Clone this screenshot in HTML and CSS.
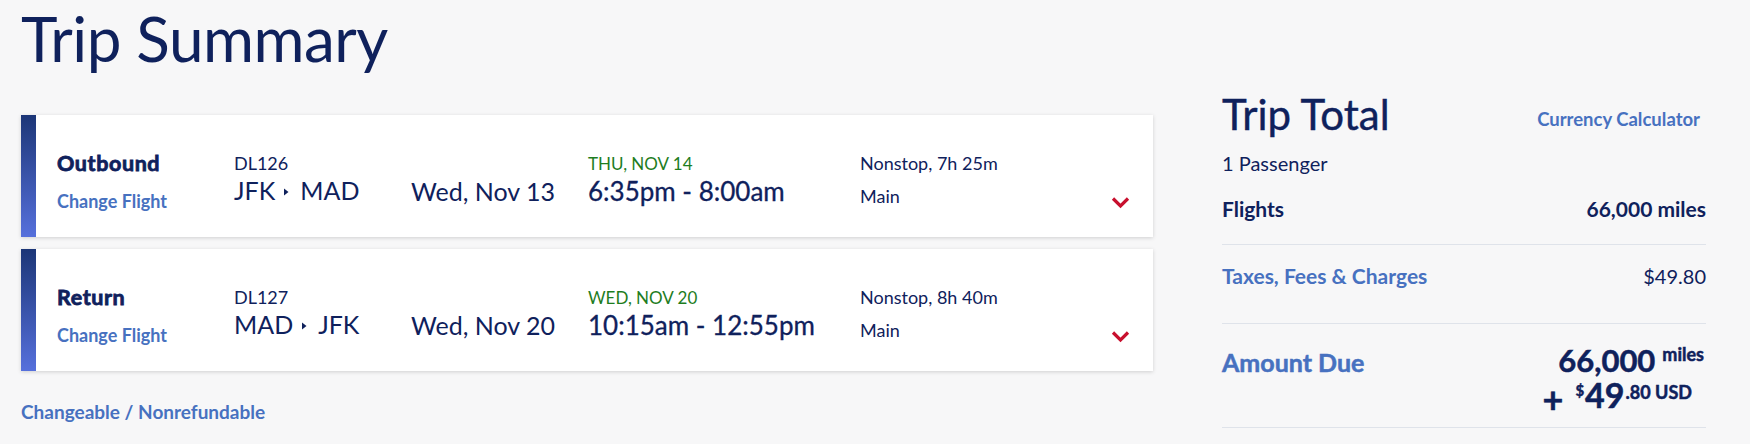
FILE: index.html
```html
<!DOCTYPE html>
<html lang="en">
<head>
  <meta charset="UTF-8" />
  <title>Trip Summary</title>
  <link rel="stylesheet" href="styles.css">
</head>
<body>

  <div class="page">

    <!-- left: flights -->
    <div class="summary">
      <h1 class="title">Trip Summary</h1>

      <div class="card">
        <div class="bar"></div>
        <div class="card-body">
          <div class="col col-leg">
            <div class="leg">Outbound</div>
            <a class="change" href="#">Change Flight</a>
          </div>
          <div class="col col-flight">
            <div class="code">DL126</div>
            <div class="route">JFK<svg class="arr" width="5" height="8" viewBox="0 0 5 8"><path d="M0 0.5L4.5 4L0 7.5Z" /></svg>MAD</div>
          </div>
          <div class="col col-date">
            <div class="date">Wed, Nov 13</div>
          </div>
          <div class="col col-time">
            <div class="day">THU, NOV 14</div>
            <div class="time">6:35pm - 8:00am</div>
          </div>
          <div class="col col-info">
            <div class="stops">Nonstop, 7h 25m</div>
            <div class="cabin">Main</div>
          </div>
          <div class="chevron">
            <svg width="19" height="13" viewBox="0 0 19 13"><path d="M2 2.5L9.5 10L17 2.5" /></svg>
          </div>
        </div>
      </div>

      <div class="card">
        <div class="bar"></div>
        <div class="card-body">
          <div class="col col-leg">
            <div class="leg">Return</div>
            <a class="change" href="#">Change Flight</a>
          </div>
          <div class="col col-flight">
            <div class="code">DL127</div>
            <div class="route">MAD<svg class="arr" width="5" height="8" viewBox="0 0 5 8"><path d="M0 0.5L4.5 4L0 7.5Z" /></svg>JFK</div>
          </div>
          <div class="col col-date">
            <div class="date">Wed, Nov 20</div>
          </div>
          <div class="col col-time">
            <div class="day">WED, NOV 20</div>
            <div class="time">10:15am - 12:55pm</div>
          </div>
          <div class="col col-info">
            <div class="stops">Nonstop, 8h 40m</div>
            <div class="cabin">Main</div>
          </div>
          <div class="chevron">
            <svg width="19" height="13" viewBox="0 0 19 13"><path d="M2 2.5L9.5 10L17 2.5" /></svg>
          </div>
        </div>
      </div>

      <a class="fare-rule" href="#">Changeable / Nonrefundable</a>
    </div>

    <!-- right: totals -->
    <div class="total">
      <div class="total-head">
        <h2>Trip Total</h2>
        <a class="calc" href="#">Currency Calculator</a>
      </div>
      <div class="pax">1 Passenger</div>

      <div class="row row-flights">
        <span>Flights</span>
        <span>66,000 miles</span>
      </div>

      <div class="row row-taxes">
        <a href="#">Taxes, Fees &amp; Charges</a>
        <span>$49.80</span>
      </div>

      <div class="row row-due">
        <span class="due-label">Amount Due</span>
        <div class="due">
          <div class="due-miles">66,000<sup>miles</sup></div>
          <div class="due-cash"><span class="plus">+</span><sup class="cur">$</sup>49<sup>.80 USD</sup></div>
        </div>
      </div>
    </div>

  </div>

</body>
</html>
```

FILE: styles.css
```css
body {
  margin: 0;
  font-family: Lato, 'Open Sans', sans-serif;
  background-color: #f7f7f8;
  color: #0f215c;
}

a {
  color: #4771c0;
  text-decoration: none;
  font-weight: bold;
}

.page {
  display: flex;
  gap: 69px;
  padding: 0 44px 0 21px;
}

.summary {
  width: 1132px;
  display: flex;
  flex-direction: column;
  align-items: flex-start;
}

.title {
  margin: 0 0 39px;
  font-size: 62px;
  font-weight: normal;
  letter-spacing: -0.5px;
  line-height: 76px;
}

/* flight cards */
.card {
  display: flex;
  width: 100%;
  height: 122px;
  margin-bottom: 12px;
  background: #fff;
  box-shadow: 0 1px 4px rgba(0, 0, 0, 0.16);
}

.bar {
  width: 15px;
  background: linear-gradient(to bottom, #1c3677, #5670dc);
}

.card-body {
  flex-grow: 1;
  display: grid;
  grid-template-columns: 177px 177px 177px 272px 1fr 42px;
  padding: 36px 0 0 21px;
}

.col {
  display: flex;
  flex-direction: column;
  align-items: flex-start;
}

.leg {
  font-size: 21.5px;
  font-weight: bold;
  letter-spacing: 0.6px;
  line-height: 24px;
  -webkit-text-stroke: 0.8px currentColor;
}

.change {
  font-size: 18px;
  line-height: 24px;
  margin-top: 14px;
}

.code {
  font-size: 18px;
  line-height: 24px;
}

.route,
.date {
  font-size: 25px;
  line-height: 30px;
  white-space: nowrap;
}

.date {
  margin-top: 25px;
}

.arr {
  fill: #0f215c;
  margin: 0 11px 0 9px;
  vertical-align: 4px;
}

.day {
  font-size: 17px;
  line-height: 24px;
  padding-top: 1px;
  color: #1e7d1e;
}

.time {
  font-size: 26px;
  line-height: 30px;
  white-space: nowrap;
  -webkit-text-stroke: 0.3px currentColor;
}

.stops,
.cabin {
  font-size: 18px;
  line-height: 24px;
}

.cabin {
  margin-top: 9px;
}

.chevron {
  align-self: flex-end;
  padding-bottom: 25px;
}

.chevron svg path {
  fill: none;
  stroke: #c8102e;
  stroke-width: 3.2;
}

.fare-rule {
  margin-top: 17px;
  font-size: 19px;
  line-height: 24px;
}

/* trip total */
.total {
  width: 484px;
  padding-top: 90px;
}

.total-head {
  display: flex;
  justify-content: space-between;
  align-items: flex-end;
}

.total-head h2 {
  margin: 0;
  font-size: 42px;
  font-weight: normal;
  line-height: 48px;
  -webkit-text-stroke: 0.4px currentColor;
}

.calc {
  font-size: 18.5px;
  line-height: 24px;
  margin: 0 6px 7px 0;
}

.pax {
  margin-top: 13px;
  font-size: 20px;
  line-height: 24px;
}

.row {
  display: flex;
  justify-content: space-between;
  border-bottom: 1px solid #dfe3ea;
  font-size: 20px;
  line-height: 24px;
}

.row-flights {
  margin-top: 22px;
  padding-bottom: 23px;
  font-size: 21px;
  font-weight: bold;
}

.row-taxes {
  padding: 19px 0 35px;
}

.row-taxes a {
  font-size: 21px;
}

.row-due {
  align-items: flex-start;
  padding: 21px 0 13px;
}

.due-label {
  font-size: 25px;
  line-height: 34px;
  font-weight: bold;
  color: #4771c0;
  -webkit-text-stroke: 0.5px currentColor;
}

.due {
  display: flex;
  flex-direction: column;
  align-items: flex-end;
  font-weight: bold;
}

.due sup {
  font-size: 18px;
  line-height: 0;
  vertical-align: 11px;
  margin-left: 7px;
}

.due-miles {
  font-size: 31px;
  line-height: 30px;
  padding-right: 2px;
  -webkit-text-stroke: 0.5px currentColor;
}

.due-cash {
  font-size: 34px;
  line-height: 30px;
  margin-top: 5px;
  padding-right: 14px;
  -webkit-text-stroke: 0.5px currentColor;
}

.due-cash .plus {
  font-size: 36px;
  margin-right: 12px;
  vertical-align: -5px;
}

.due-cash .cur {
  margin: 0 1px 0 0;
  font-size: 15px;
  vertical-align: 12px;
}

.due-cash sup {
  margin-left: 1px;
  font-size: 18px;
  vertical-align: 9px;
}
```
